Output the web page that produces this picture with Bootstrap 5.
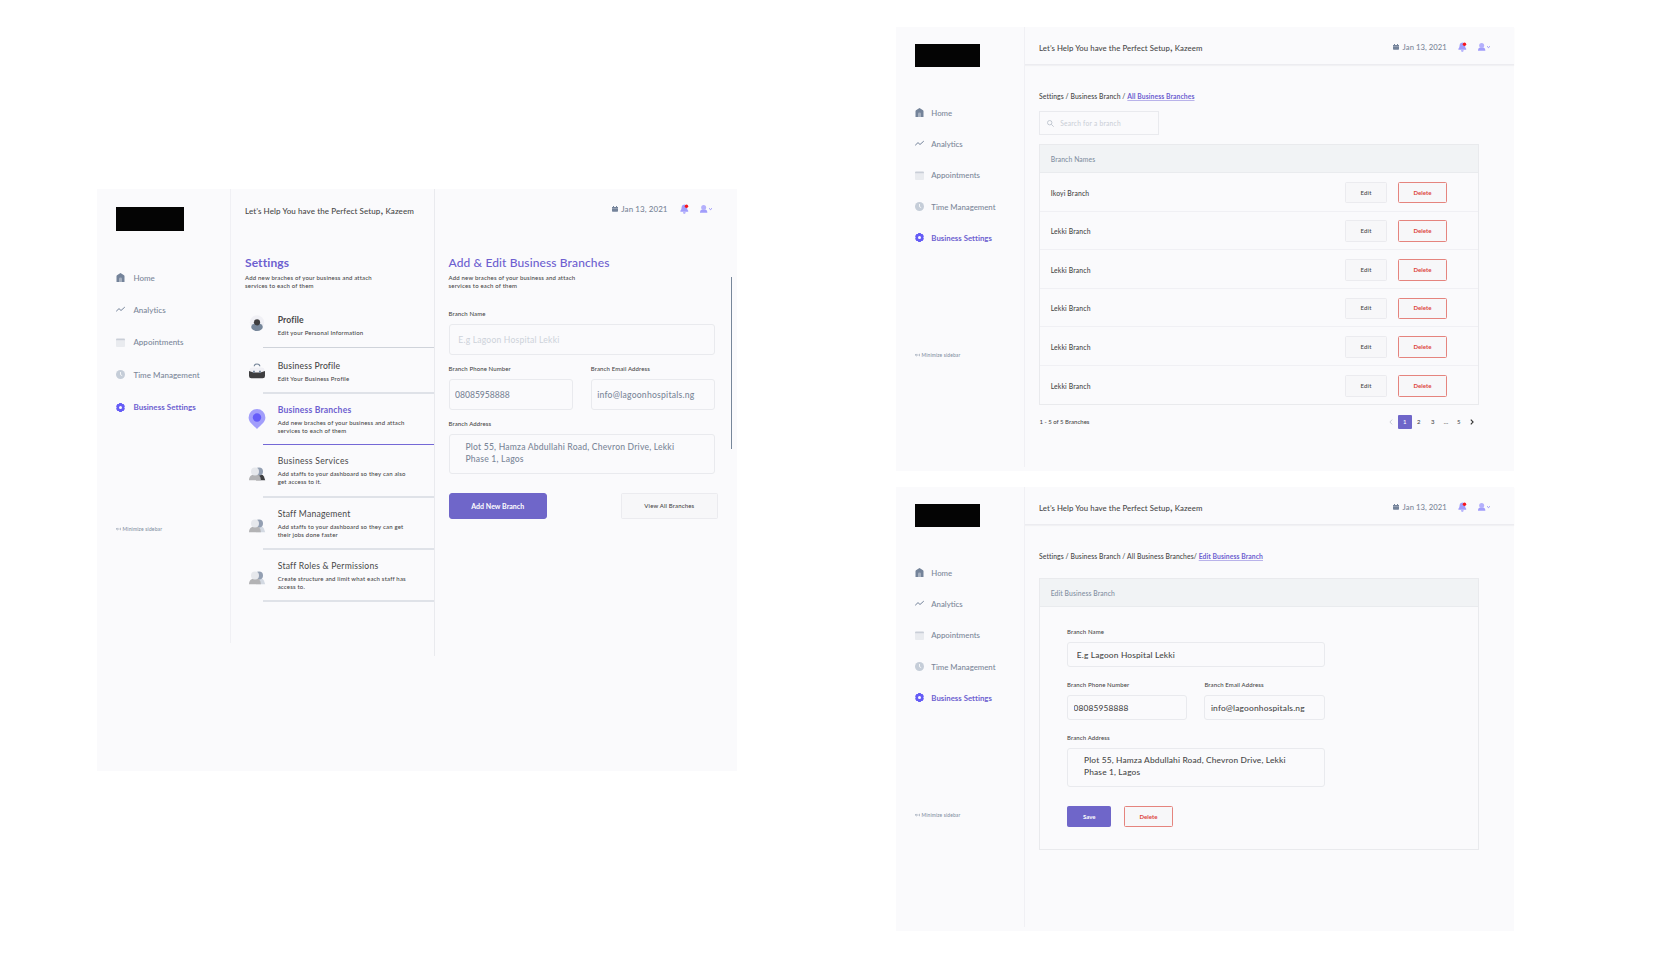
<!DOCTYPE html>
<html lang="en">
<head>
<meta charset="utf-8">
<meta name="viewport" content="width=device-width, initial-scale=1">
<title>Business Branches</title>
<link href="https://cdn.jsdelivr.net/npm/bootstrap@5.3.0/dist/css/bootstrap.min.css" rel="stylesheet">
<style>
:root{--ink:#484848;--slate:#7a8799;--violet:#6d5fd0;--fill:#6f66c9;--line:#e9eaee;--board:#fafafc}
body{font-family:Lato,"Liberation Sans",sans-serif;font-weight:500;color:var(--ink);background:#fff;width:1680px;height:960px;overflow:hidden;font-size:8px;line-height:8px}
h1,h2,h3,p,ul,label,hr{margin:0}
svg{display:block;flex:none}
.stage{padding:27px 166px 0 97px}
.board{background:var(--board);position:relative}
.board-main{width:640px;height:582px;margin-top:162px}
.board-side{width:618px;height:443.500px}
.board-side + .board-side{margin-top:16.500px}
/* sidebar */
.side{width:134px;height:454px;padding:17.5px 0 0 19px;border-right:1px solid #f0f0f4}
.board-side .side{width:129px;height:440px;padding:17px 0 0 19px}
.brand{width:68px;height:24px;background:#040404}
.board-side .brand{width:65px;height:23px}
.menu{margin-top:30.9px}
.board-side .menu{margin-top:30px}
.menu a{height:32.4px;padding:0;gap:8.4px;font-size:8px;letter-spacing:.02px;color:var(--slate)}
.board-side .menu a{height:31.33px;gap:7.3px;font-size:7.8px;letter-spacing:0}
.menu a.active{color:var(--violet);font-weight:700;letter-spacing:.04px}
.board-side .menu a.active{letter-spacing:.02px}
.menu svg{width:9px;height:9px}
.mini{margin-top:100.6px;height:10px;font-size:5px;letter-spacing:.15px;color:#8390a2;gap:1.5px}
.board-side .mini{margin-top:96.7px;font-size:4.9px}
/* headers */
.greet{font-size:8px;line-height:16px;letter-spacing:.1px;white-space:nowrap}
.greet b{font-size:12px;font-weight:500;line-height:0}
.tools{color:var(--slate);font-size:8px;letter-spacing:.07px;height:12px;white-space:nowrap}
.editor .tools{padding-left:163.3px}
.date{width:58.3px;margin-left:3.5px;line-height:12px}
.who{margin-left:11.3px}
.topbar{height:38px;border-bottom:1px solid #ececf0;box-shadow:0 1px 1px #f1f1f4;padding-left:14px}
.topbar .greet{width:354px;margin-top:12.7px;font-size:7.8px;letter-spacing:.07px}
.topbar .greet b{font-size:11.5px}
.topbar .tools{margin-top:13.5px;font-size:7.7px;letter-spacing:.05px}
.topbar .date{width:55.7px;margin-left:3.6px}
.topbar .who{margin-left:10.3px}
/* settings list */
.settings{width:204px;height:467px;padding:14px 0 0 14px;border-right:1px solid var(--line)}
.title{font-size:12px;line-height:16px;margin-top:36px;color:var(--violet);font-weight:700;letter-spacing:.1px;white-space:nowrap}
.editor .title{margin-top:40px;font-weight:500;letter-spacing:.12px}
.desc{font-size:6px;line-height:8px;letter-spacing:.185px;white-space:nowrap}
.title + .desc{margin-top:3px}
.entry{gap:8.7px;height:50px;padding-top:9.7px}
.entry-profile{height:56.500px;padding-top:23.7px}
.entry-firm{height:44.2px;padding-top:12px}
.entry-firm svg{margin-top:1.7px}
.entry-branches{padding-top:10.2px}
.entry-branches svg{margin-top:5.6px}
.entry-services{height:50.7px;padding-top:10.2px}
.entry h3{font-size:8.6px;line-height:12px;font-weight:500;letter-spacing:.18px;margin-bottom:3px;white-space:nowrap}
.entry-profile h3{font-weight:700;letter-spacing:.12px}
.entry-branches h3{font-weight:700;letter-spacing:.17px;color:var(--violet)}
.entry .light{font-weight:400;letter-spacing:.22px}
.entry-services .light{letter-spacing:.29px}
.rule{height:2px;margin-left:17.7px;background:#dfe2e8;opacity:1;border:0}
.rule-thin{height:1px;background:#cfd3da}
.rule-on{height:1.5px;background:#7468d6}
.people{margin-top:8.8px;--back:#d3d9e2}
.people-dark{--back:#3e3e40}
/* forms */
.editor{width:302px;padding:14px 22px 0 13.5px}
.lbl{display:block;font-size:6px;line-height:8px;letter-spacing:.12px;white-space:nowrap}
.lbl + .form-control{margin-top:6.3px}
.desc + .lbl{margin-top:20px}
.pair{margin:9.6px 0}
.pair > div{width:124.3px}
.board .form-control{background:transparent;border:1px solid var(--line);border-radius:3px;padding:1px 0 0 5.5px;font-size:8.6px;line-height:11.4px;font-weight:500;color:var(--slate);letter-spacing:.19px;height:30.9px;min-height:0;resize:none;overflow:hidden;box-shadow:none}
.board .form-control.in-wide{padding-left:8.8px}
.board .form-control::placeholder{color:#cdd2da;font-weight:400}
.board textarea.form-control{height:40.4px;padding:7.5px 0 0 16px}
.board .num{letter-spacing:-.01px}
.board .mail{letter-spacing:.23px}
.panel .form-control{height:24.7px;color:var(--ink);font-size:8.4px;letter-spacing:.15px}
.panel .mail{letter-spacing:.18px}
.panel textarea.form-control{height:39.3px;padding-top:6.5px}
.actions{margin-top:18.3px;width:269.2px}
.board .btn{display:inline-flex;align-items:center;justify-content:center;padding:0;border-radius:1.5px;font-size:6px;line-height:8px;font-weight:500;letter-spacing:.15px;--bs-btn-color:var(--ink);--bs-btn-border-color:#ebebef;--bs-btn-bg:#f7f7f9}
.board .btn-fill{--bs-btn-bg:var(--fill);--bs-btn-border-color:var(--fill);--bs-btn-color:#fff;font-weight:700;letter-spacing:0}
.board .btn-del{--bs-btn-border-color:#e5847e;--bs-btn-color:#dc3f3a;font-weight:700;letter-spacing:0;width:49px;height:21.6px}
.board .btn-add{width:98.5px;height:26px;font-size:7px;letter-spacing:.03px;border-radius:3px}
.btn-view{width:96.7px;height:26px}
.btn-edit{width:42px;height:21.6px}
.btn-edit + .btn-del{margin-left:11px}
.btn-save{width:44.4px;height:21.6px}
.thumb{right:4.700px;top:88px;width:1.600px;height:172px;background:#77879a}
/* list and edit boards */
.crumbs{font-size:6.8px;line-height:10px;letter-spacing:.08px;margin-top:26.3px;white-space:nowrap}
.crumbs a{color:var(--violet);font-weight:700;letter-spacing:.07px;text-decoration-color:#b9b3ea;text-underline-offset:1.2px;text-decoration-thickness:1px}
.wide{padding-left:14px;width:454px}
.search{width:120px;height:24px;margin:10.2px 0 9px;border:1px solid var(--line);padding-left:7px;gap:6.2px;color:#c8cdd5;font-size:6.6px;font-weight:400;letter-spacing:.26px}
.panel{border:1px solid #e9eaed;width:440px}
.panel-top{height:27.6px;background:#f1f3f5;border-bottom:1px solid #e9ebee;padding-left:10.7px;font-size:6.8px;letter-spacing:.1px;color:#8390a2}
.line-row{height:38.6px;border-bottom:1px solid #f0f0f4;padding:1.6px 31px 0 10.7px;font-size:6.8px;letter-spacing:.14px}
.line-row:last-child{border-bottom:0;height:38px}
.foot{height:14px;margin-top:10.3px;font-size:6px;width:435px;padding-left:.5px}
.foot .pg{width:14px;height:14px;line-height:14px;text-align:center;display:block}
.foot .pg-s{width:12.7px}
.foot .on{background:var(--fill);color:#fff;border-radius:1px}
.prev{margin-right:5px}
.next{margin-left:5px}
.edit-panel{margin-top:17.2px;height:271.5px}
.edit-form{width:284.7px;padding:20.8px 0 0 27px}
.edit-form .lbl + .form-control{margin-top:6px}
.edit-form .pair{margin:14.3px 0}
.edit-form .pair > div{width:120.3px}
.edit-form .actions{margin-top:18.7px;gap:12.6px}
</style>
</head>
<body>
<svg width="0" height="0" class="position-absolute" aria-hidden="true">
  <symbol id="home" viewBox="0 0 9 9"><path fill="#74839a" d="M4.5 0 8 2.2q.5.3.5.9V9H.5V3.1q0-.6.5-.9z"/><path fill="#a6b0bf" d="M3 9V5.600q0-1 1.500-1T6 5.600V9z"/></symbol>
  <symbol id="chart" viewBox="0 0 9 9"><path fill="none" stroke="#74839a" stroke-width="1" d="M.2 6.300 3 3.600l2 1.900 3.800-3.400"/></symbol>
  <symbol id="cal" viewBox="0 0 9 9"><path fill="#e9ebef" d="M0 3h9v5q0 1-1 1H1Q0 9 0 8z"/><path fill="#c9ced7" d="M0 2.600V1.500Q0 .6 1 .6h7q1 0 1 .9v1.100z"/></symbol>
  <symbol id="clock" viewBox="0 0 9 9"><circle cx="4.500" cy="4.500" r="4.500" fill="#c5cdd8"/><path fill="none" stroke="#fff" stroke-width=".8" d="M4.500 2v2.700l1.700 1"/></symbol>
  <symbol id="gear" viewBox="0 0 9 9"><path fill="#655cf6" fill-rule="evenodd" d="M3.300 0h2.400l.5 1 1.400.1L8.900 3.200 8.300 4.500l.6 1.300-1.300 2.100-1.400.1-.5 1H3.300l-.5-1-1.400-.1L.1 5.800.7 4.500.1 3.200 1.400 1.100 2.800 1zM4.500 3a1.500 1.500 0 1 0 0 3 1.500 1.500 0 0 0 0-3z"/></symbol>
  <symbol id="date" viewBox="0 0 6 6"><path fill="#74839a" d="M0 2.300h6v2.800q0 .7-.7.7H.7Q0 5.800 0 5.100zM0 1.900V1h1V.1h1V1h2V.1h1V1h1v.9z"/></symbol>
  <symbol id="bell" viewBox="0 0 9 10"><path fill="#a19dfb" d="M4.300.6q2.800.4 2.800 3.600 0 1.400 1.100 2.600v1H.4v-1Q1.500 5.600 1.500 4.200 1.500 1 4.300.6zM3 8.200h2.700Q5.500 9.700 4.300 9.700T3 8.200z"/><circle cx="6.500" cy="2.300" r="1.700" fill="#f8141c"/></symbol>
  <symbol id="user" viewBox="0 0 13 8"><path fill="#a19dfb" d="M0 7.800V6.900Q.1 5 2.200 4.500h2.900Q7.200 5 7.300 6.900v.9z"/><circle cx="3.650" cy="2.500" r="2.500" fill="#b4b0fc"/><path fill="none" stroke="#8f8af8" stroke-width="1" d="m9.100 3.400 1.400 1.200 1.400-1.200"/></symbol>
  <symbol id="people" viewBox="0 0 24 20"><path fill="var(--back)" d="M11 16.300 13 10.500h3q2 0 2.900 2l1.300 3.800z"/><circle cx="14" cy="7.400" r="4" fill="#939fb2"/><path fill="#b3b3b5" d="M4 16.300q0-3.700 2.600-5l1.700-.8h4.300l1.300.8q2 1.300 2 5z"/><circle cx="10" cy="7.400" r="4" fill="#e6e8ec"/></symbol>
  <symbol id="back" viewBox="0 0 5 4"><path fill="none" stroke="#8390a2" stroke-width=".6" d="M.4 2h3.200M1.500.9.4 2l1.100 1.100M4.600.8v2.400"/></symbol>
</svg>

<div class="stage d-flex justify-content-between">

  <section class="board board-main d-flex">
    <aside class="side">
      <div class="brand"></div>
      <nav class="menu nav flex-column flex-nowrap">
        <a class="nav-link d-flex align-items-center" href="#"><svg><use href="#home"/></svg>Home</a>
        <a class="nav-link d-flex align-items-center" href="#"><svg><use href="#chart"/></svg>Analytics</a>
        <a class="nav-link d-flex align-items-center" href="#"><svg><use href="#cal"/></svg>Appointments</a>
        <a class="nav-link d-flex align-items-center" href="#"><svg><use href="#clock"/></svg>Time Management</a>
        <a class="nav-link d-flex align-items-center active" href="#"><svg><use href="#gear"/></svg>Business Settings</a>
      </nav>
      <div class="mini d-flex align-items-center"><svg width="5" height="4"><use href="#back"/></svg>Minimize sidebar</div>
    </aside>

    <div class="settings">
      <p class="greet">Let’s Help You have the Perfect Setup<b>,</b> Kazeem</p>
      <h2 class="title">Settings</h2>
      <p class="desc">Add new braches of your business and attach<br>services to each of them</p>

      <div class="entry entry-profile d-flex">
        <svg width="24" height="20" viewBox="0 0 24 20"><circle cx="12" cy="8.500" r="7.200" fill="#f0f0f5"/><ellipse cx="12" cy="13" rx="5.800" ry="4" fill="#76869a"/><circle cx="12" cy="8.300" r="3.100" fill="#3e3e40"/></svg>
        <div><h3>Profile</h3><p class="desc">Edit your Personal Information</p></div>
      </div>
      <hr class="rule rule-thin">
      <div class="entry entry-firm d-flex">
        <svg width="24" height="20" viewBox="0 0 24 20"><path fill="none" stroke="#76869a" stroke-width="1.200" d="M9.200 5.300Q9.200 3 12 3t2.800 2.300"/><path fill="#f0f0f5" d="M4.500 9.500q0-3 3-3h9q3 0 3 3v3h-15z"/><path fill="#3e3e40" d="M4 10 8.500 11.600h7L20 10v5q0 2.300-2.300 2.300H6.300Q4 17.300 4 15z"/><path fill="#76869a" d="M8 9.800h1.900v2H8zm6 0h1.900v2H14z"/></svg>
        <div><h3>Business Profile</h3><p class="desc">Edit Your Business Profile</p></div>
      </div>
      <hr class="rule">
      <div class="entry entry-branches d-flex">
        <svg width="24" height="20" viewBox="0 0 24 20"><path fill="#a29efb" d="M12 0a8.400 8.400 0 0 1 8.400 8.400c0 5-4.600 7.300-8.400 11.600-3.800-4.300-8.400-6.600-8.400-11.600A8.400 8.400 0 0 1 12 0z"/><circle cx="12" cy="8.500" r="4.200" fill="#655cf9"/></svg>
        <div><h3>Business Branches</h3><p class="desc">Add new braches of your business and attach<br>services to each of them</p></div>
      </div>
      <hr class="rule rule-on">
      <div class="entry entry-services d-flex">
        <svg class="people people-dark" width="24" height="20"><use href="#people"/></svg>
        <div><h3 class="light">Business Services</h3><p class="desc">Add staffs to your dashboard so they can also<br>get access to it.</p></div>
      </div>
      <hr class="rule">
      <div class="entry d-flex">
        <svg class="people" width="24" height="20"><use href="#people"/></svg>
        <div><h3 class="light">Staff Management</h3><p class="desc">Add staffs to your dashboard so they can get<br>their jobs done faster</p></div>
      </div>
      <hr class="rule">
      <div class="entry d-flex">
        <svg class="people" width="24" height="20"><use href="#people"/></svg>
        <div><h3 class="light">Staff Roles &amp; Permissions</h3><p class="desc">Create structure and limit what each staff has<br>access to.</p></div>
      </div>
      <hr class="rule">
    </div>

    <div class="editor">
      <div class="tools d-flex align-items-center">
        <svg width="6" height="6"><use href="#date"/></svg><span class="date">Jan 13, 2021</span>
        <svg width="9" height="10"><use href="#bell"/></svg><svg class="who" width="13" height="8"><use href="#user"/></svg>
      </div>
      <h1 class="title">Add &amp; Edit Business Branches</h1>
      <p class="desc">Add new braches of your business and attach<br>services to each of them</p>
      <label class="lbl">Branch Name</label>
      <input class="form-control in-wide" placeholder="E.g Lagoon Hospital Lekki">
      <div class="pair d-flex justify-content-between">
        <div><label class="lbl">Branch Phone Number</label><input class="form-control num" value="08085958888"></div>
        <div><label class="lbl">Branch Email Address</label><input class="form-control mail" value="info@lagoonhospitals.ng"></div>
      </div>
      <label class="lbl">Branch Address</label>
      <textarea class="form-control">Plot 55, Hamza Abdullahi Road, Chevron Drive, Lekki
Phase 1, Lagos</textarea>
      <div class="actions d-flex justify-content-between">
        <button class="btn btn-fill btn-add">Add New Branch</button>
        <button class="btn btn-view">View All Branches</button>
      </div>
    </div>
    <div class="thumb position-absolute"></div>
  </section>

  <div>
    <section class="board board-side d-flex">
      <aside class="side">
        <div class="brand"></div>
        <nav class="menu nav flex-column flex-nowrap">
          <a class="nav-link d-flex align-items-center" href="#"><svg><use href="#home"/></svg>Home</a>
          <a class="nav-link d-flex align-items-center" href="#"><svg><use href="#chart"/></svg>Analytics</a>
          <a class="nav-link d-flex align-items-center" href="#"><svg><use href="#cal"/></svg>Appointments</a>
          <a class="nav-link d-flex align-items-center" href="#"><svg><use href="#clock"/></svg>Time Management</a>
          <a class="nav-link d-flex align-items-center active" href="#"><svg><use href="#gear"/></svg>Business Settings</a>
        </nav>
        <div class="mini d-flex align-items-center"><svg width="5" height="4"><use href="#back"/></svg>Minimize sidebar</div>
      </aside>
      <div class="flex-grow-1">
        <header class="topbar d-flex">
          <p class="greet">Let’s Help You have the Perfect Setup<b>,</b> Kazeem</p>
          <div class="tools d-flex align-items-center"><svg width="6" height="6"><use href="#date"/></svg><span class="date">Jan 13, 2021</span><svg width="9" height="10"><use href="#bell"/></svg><svg class="who" width="13" height="8"><use href="#user"/></svg></div>
        </header>
        <div class="wide">
          <div class="crumbs">Settings / Business Branch / <a href="#">All Business Branches</a></div>
          <div class="search d-flex align-items-center"><svg width="7" height="7" viewBox="0 0 7 7"><path fill="none" stroke="#bcc3cd" stroke-width=".9" d="M2.700.5a2.200 2.200 0 1 1 0 4.400 2.200 2.200 0 0 1 0-4.400zM4.300 4.300l2.400 2.400"/></svg>Search for a branch</div>
          <div class="panel">
            <div class="panel-top d-flex align-items-center">Branch Names</div>
            <div>
              <div class="line-row d-flex align-items-center"><span class="me-auto">Ikoyi Branch</span><button class="btn btn-edit">Edit</button><button class="btn btn-del">Delete</button></div>
              <div class="line-row d-flex align-items-center"><span class="me-auto">Lekki Branch</span><button class="btn btn-edit">Edit</button><button class="btn btn-del">Delete</button></div>
              <div class="line-row d-flex align-items-center"><span class="me-auto">Lekki Branch</span><button class="btn btn-edit">Edit</button><button class="btn btn-del">Delete</button></div>
              <div class="line-row d-flex align-items-center"><span class="me-auto">Lekki Branch</span><button class="btn btn-edit">Edit</button><button class="btn btn-del">Delete</button></div>
              <div class="line-row d-flex align-items-center"><span class="me-auto">Lekki Branch</span><button class="btn btn-edit">Edit</button><button class="btn btn-del">Delete</button></div>
              <div class="line-row d-flex align-items-center"><span class="me-auto">Lekki Branch</span><button class="btn btn-edit">Edit</button><button class="btn btn-del">Delete</button></div>
            </div>
          </div>
          <div class="foot d-flex align-items-center">
            <span class="me-auto">1 - 5 of 5 Branches</span>
            <svg class="prev" width="4" height="6" viewBox="0 0 4 6"><path fill="none" stroke="#c3c8d0" stroke-width=".9" d="M3.200.6.9 3l2.300 2.400"/></svg>
            <span class="pg on">1</span><span class="pg">2</span><span class="pg">3</span><span class="pg pg-s">...</span><span class="pg pg-s">5</span>
            <svg class="next" width="4" height="6" viewBox="0 0 4 6"><path fill="none" stroke="#333" stroke-width="1.100" d="M.8.6 3.100 3 .8 5.400"/></svg>
          </div>
        </div>
      </div>
    </section>

    <section class="board board-side d-flex">
      <aside class="side">
        <div class="brand"></div>
        <nav class="menu nav flex-column flex-nowrap">
          <a class="nav-link d-flex align-items-center" href="#"><svg><use href="#home"/></svg>Home</a>
          <a class="nav-link d-flex align-items-center" href="#"><svg><use href="#chart"/></svg>Analytics</a>
          <a class="nav-link d-flex align-items-center" href="#"><svg><use href="#cal"/></svg>Appointments</a>
          <a class="nav-link d-flex align-items-center" href="#"><svg><use href="#clock"/></svg>Time Management</a>
          <a class="nav-link d-flex align-items-center active" href="#"><svg><use href="#gear"/></svg>Business Settings</a>
        </nav>
        <div class="mini d-flex align-items-center"><svg width="5" height="4"><use href="#back"/></svg>Minimize sidebar</div>
      </aside>
      <div class="flex-grow-1">
        <header class="topbar d-flex">
          <p class="greet">Let’s Help You have the Perfect Setup<b>,</b> Kazeem</p>
          <div class="tools d-flex align-items-center"><svg width="6" height="6"><use href="#date"/></svg><span class="date">Jan 13, 2021</span><svg width="9" height="10"><use href="#bell"/></svg><svg class="who" width="13" height="8"><use href="#user"/></svg></div>
        </header>
        <div class="wide">
          <div class="crumbs">Settings / Business Branch / All Business Branches/ <a href="#">Edit Business Branch</a></div>
          <div class="panel edit-panel">
            <div class="panel-top d-flex align-items-center">Edit Business Branch</div>
            <div class="edit-form">
              <label class="lbl">Branch Name</label>
              <input class="form-control in-wide" value="E.g Lagoon Hospital Lekki">
              <div class="pair d-flex justify-content-between">
                <div><label class="lbl">Branch Phone Number</label><input class="form-control num" value="08085958888"></div>
                <div><label class="lbl">Branch Email Address</label><input class="form-control mail" value="info@lagoonhospitals.ng"></div>
              </div>
              <label class="lbl">Branch Address</label>
              <textarea class="form-control">Plot 55, Hamza Abdullahi Road, Chevron Drive, Lekki
Phase 1, Lagos</textarea>
              <div class="actions d-flex">
                <button class="btn btn-fill btn-save">Save</button>
                <button class="btn btn-del">Delete</button>
              </div>
            </div>
          </div>
        </div>
      </div>
    </section>
  </div>
</div>
<script src="https://cdn.jsdelivr.net/npm/bootstrap@5.3.0/dist/js/bootstrap.bundle.min.js"></script>
</body>
</html>
